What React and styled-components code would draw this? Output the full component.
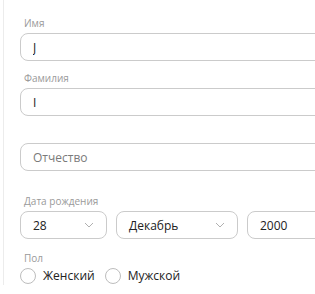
import React from "react";
import styled, { createGlobalStyle } from "styled-components";

const Global = createGlobalStyle`
  html, body { margin: 0; padding: 0; background: #fff; overflow: hidden; }
  body { font-family: "Open Sans", "Noto Sans", sans-serif; }
  * { box-sizing: border-box; }
`;

const Page = styled.div`width: 380px; height: 294px; background: #fff;`;
const Card = styled.div`margin-left: 3px; border-left: 1px solid #ececec; height: 285px; overflow: hidden; padding: 17px 0 0 16px;`;
const Field = styled.div`margin-top: ${p => p.top || 0}px; display: flex; flex-direction: column;`;
const Label = styled.div`height: 12px; line-height: 12px; font-size: 10px; color: #9a9a9a; margin: 0 0 4px 4px;`;
const Input = styled.input`
  height: 28px; width: ${p => p.w || "100%"}; border: 1px solid #cbcbcb; border-radius: 8px;
  padding: 0 12px; font-family: inherit; font-size: 12px; color: #222; background: #fff; outline: none;
  &::placeholder { color: #7a7a7a; }
`;
const Row = styled.div`display: grid; grid-template-columns: 87px 122px 1fr; gap: 9px; width: 360px;`;
const Select = styled.div`
  height: 28px; border: 1px solid #cbcbcb; border-radius: 8px; padding: 0 6px 0 12px;
  display: flex; align-items: center; justify-content: space-between; font-size: 12px; color: #222;
`;
const Radios = styled.div`display: flex; align-items: center; gap: 10px;`;
const RadioItem = styled.label`display: flex; align-items: center; gap: 7px; font-size: 12px; line-height: 16px; color: #222;`;
const Circle = styled.span`width: 16px; height: 16px; border: 1px solid #bdbdbd; border-radius: 50%; display: inline-block;`;

const Chevron = () => (
  <svg width="10" height="6" viewBox="0 0 10 6" style={{ marginRight: 6 }}>
    <path d="M1 1 L5 5 L9 1" fill="none" stroke="#b0b0b0" strokeWidth="1" />
  </svg>
);

export default function App() {
  return (
    <Page>
      <Global />
      <Card>
        <Field>
          <Label>Имя</Label>
          <Input w="360px" defaultValue="J" spellCheck={false} />
        </Field>
        <Field top={11}>
          <Label>Фамилия</Label>
          <Input w="360px" defaultValue="I" spellCheck={false} />
        </Field>
        <Field top={11}>
          <Label />
          <Input w="360px" placeholder="Отчество" />
        </Field>
        <Field top={24}>
          <Label>Дата рождения</Label>
          <Row>
            <Select>28<Chevron /></Select>
            <Select>Декабрь<Chevron /></Select>
            <Input defaultValue="2000" spellCheck={false} />
          </Row>
        </Field>
        <Field top={13}>
          <Label>Пол</Label>
          <Radios>
            <RadioItem><Circle />Женский</RadioItem>
            <RadioItem><Circle />Мужской</RadioItem>
          </Radios>
        </Field>
      </Card>
    </Page>
  );
}
